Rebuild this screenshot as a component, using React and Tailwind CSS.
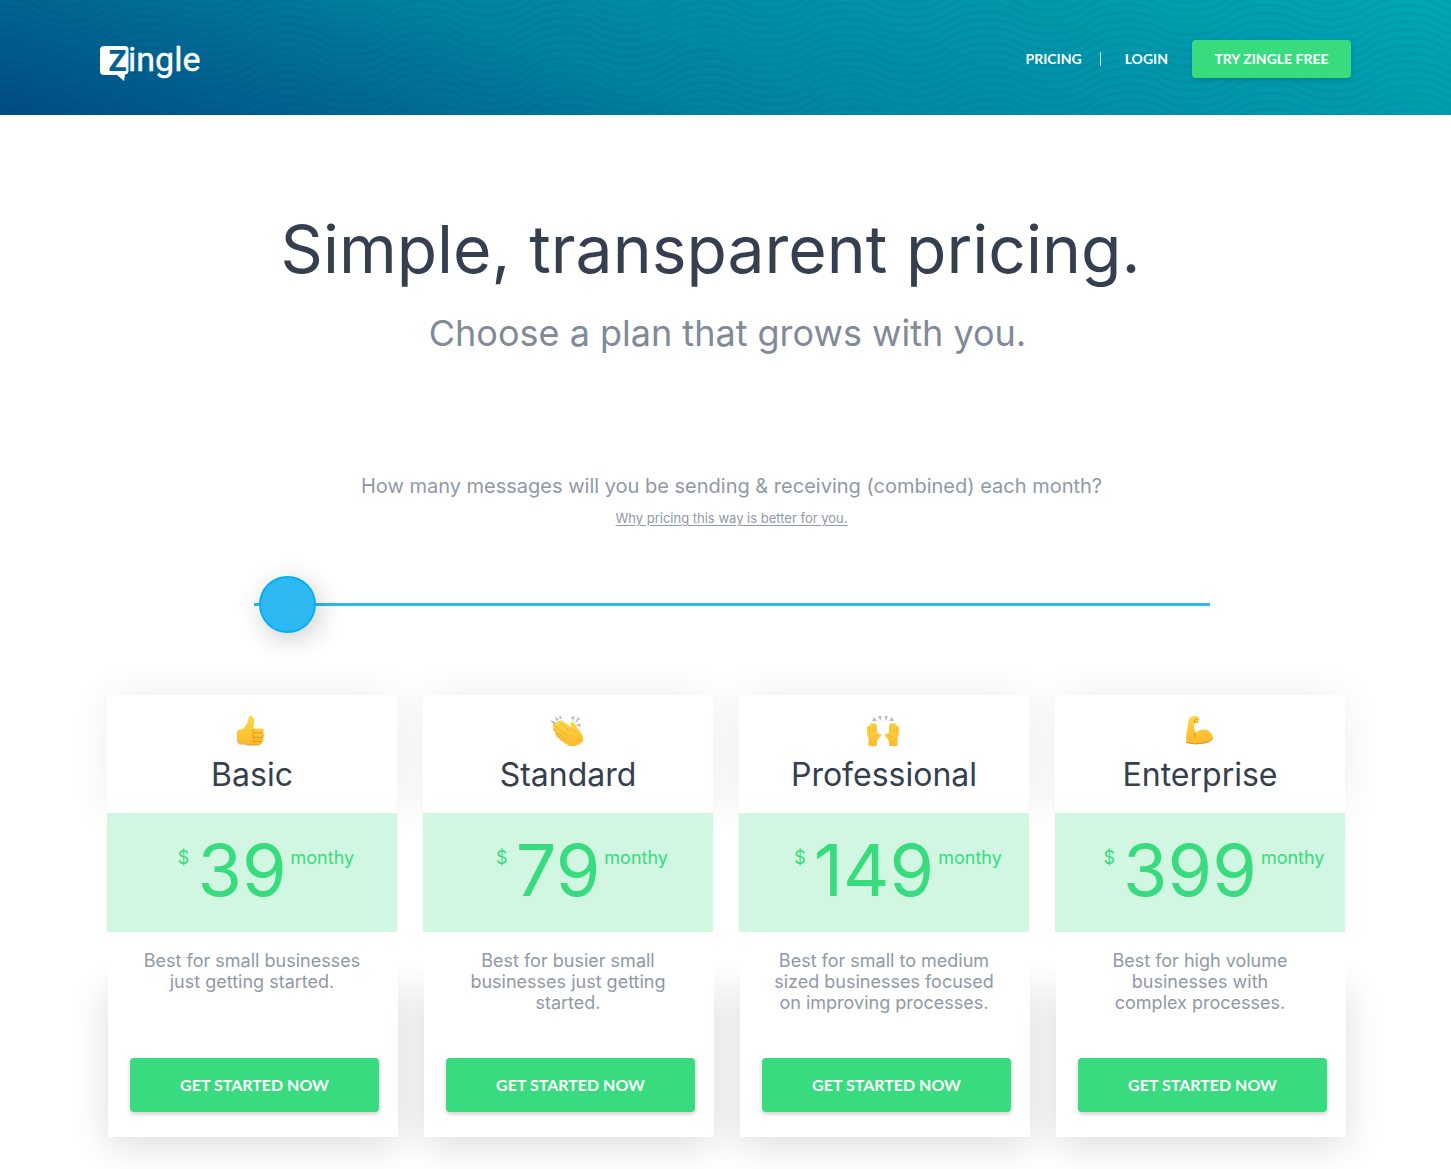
function WavePattern() {
  return (
    <svg className="absolute inset-0 h-full w-full" aria-hidden="true">
      <defs>
        <pattern id="waves" width="140" height="8" patternUnits="userSpaceOnUse" patternTransform="rotate(-3)">
          {[-16, -8, 0, 8, 16].map((y) => (
            <path
              key={y}
              d={`M-35 ${y} C-17 ${y - 12} 17 ${y - 12} 35 ${y} S87 ${y + 12} 105 ${y} S157 ${y - 12} 175 ${y}`}
              fill="none"
              stroke="#00284f"
              strokeOpacity="0.06"
              strokeWidth="3"
            />
          ))}
        </pattern>
      </defs>
      <rect width="100%" height="100%" fill="url(#waves)" />
    </svg>
  );
}

function Logo() {
  return (
    <svg className="block" width="110" height="50" viewBox="0 0 110 50" role="img" aria-label="zingle">
      <path d="M4 10 H25 Q28.500 10 28.500 13.500 V35 Q28.500 38 25 38.500 L24 45 L17 39 H4 Q0 39 0 35 V14 Q0 10 4 10 Z" fill="#fff" />
      <text x="8" y="35" fontFamily="Roboto, sans-serif" fontWeight="500" fontSize="38" fill="#00628f">z</text>
      <text x="28" y="35" fontFamily="Roboto, sans-serif" fontSize="34" fill="#fff" stroke="#fff" strokeWidth="0.4">ingle</text>
    </svg>
  );
}

function EmojiGradient({ id }) {
  return (
    <defs>
      <linearGradient id={id} x1="0" y1="0" x2="0" y2="1">
        <stop offset="0" stopColor="#ffd84a" />
        <stop offset="1" stopColor="#fbb829" />
      </linearGradient>
    </defs>
  );
}

function ThumbsUp() {
  return (
    <svg width="34" height="34" viewBox="0 0 34 34" aria-hidden="true">
      <EmojiGradient id="thumb" />
      <path d="M3 18 Q3 16 5.500 15.800 L9 15 C11 12 13.500 10 14 7 L14.500 3.500 C15 1.300 20 1 20.300 6 C20.500 9 19.500 12 19.500 14.500 L27 14.500 C30 14.500 30.500 18 29 19 C31 20 30.500 23 29 23.500 C30 25 29.500 27 28 27.500 C28.500 29.500 27 31 25 31 H15 C12 31 11 29.500 9 29.700 L5 29.700 Q3 29.500 3 27 Z" fill="url(#thumb)" />
      <path d="M20 18.800 H29 M19.500 23.400 H29 M20 27.600 H28 M19.500 15 Q17.500 17 20 19 Q17.500 21 19.500 23.400 Q18 26 20.500 28" fill="none" stroke="#e3951b" strokeWidth="1" />
      <path d="M5 30 L9 30 C12 30 12 31 15 31 H25" fill="none" stroke="#dd9520" strokeWidth="0.8" />
    </svg>
  );
}

function Clap() {
  return (
    <svg width="34" height="34" viewBox="0 0 34 34" aria-hidden="true">
      <EmojiGradient id="clap" />
      <path d="M0 6 L6 8 L4 11 Z M5 2 L9 6 L6 7 Z M10 1 L12 5 L9 5 Z M21 3 L25 2 L23 7 Z M28 3 L30 5 L25 9 Z M28 10 L31 10 L30 13 L26 11 Z" fill="#b9bcc0" />
      <path d="M8 8 Q11 5 13.500 7.500 L22 14 L20.500 10 Q21 6.500 24 8.500 L28 15 Q34 21 33 27 Q28 33 20 32 Q15 30 7 23 Q4 20 6 18.500 Q1 16 4 14 Q1 11.500 4.500 10 Q6 7 8 8 Z" fill="url(#clap)" />
      <path d="M4 10 Q4 12 8 15 L17 22 M3.500 14 Q5 17 8 19 L15 25 M6 19 Q8 23 13 27 M9 8 L20 17 M21 14 L25 18" fill="none" stroke="#e2a535" strokeWidth="0.8" strokeLinecap="round" />
    </svg>
  );
}

function Hand() {
  return (
    <g>
      <path d="M2 31.500 V24 Q0 21 0.500 13 Q1.500 10.500 3 13 L3.200 10.500 Q4.500 8 5.800 10 Q7 7.500 8.500 10 Q10.300 9 10.500 12 L11 20 Q13 19 14.500 20.500 Q15 22 12.500 24 L10.500 27 V31.500 Q6 33 2 31.500 Z" fill="url(#raise)" />
      <path d="M3.100 12 V18 M5.800 10.500 V18 M8.400 10.500 V18 M10.800 21 Q8 22 7.500 24" fill="none" stroke="#e2a026" strokeWidth="0.6" />
    </g>
  );
}

function RaisedHands() {
  return (
    <svg width="34" height="34" viewBox="0 0 34 34" aria-hidden="true">
      <EmojiGradient id="raise" />
      <path d="M8 3 L11 7 L6 7 Z M12 2 L15.500 2 L14.500 7 Z M22 2 L18.500 2 L19.500 7 Z M26 3 L23 7 L28 7 Z" fill="#b9bcc0" />
      <g transform="translate(0.500 0)"><Hand /></g>
      <g transform="translate(33.500 0) scale(-1 1)"><Hand /></g>
    </svg>
  );
}

function Biceps() {
  return (
    <svg width="34" height="34" viewBox="0 0 34 34" aria-hidden="true">
      <EmojiGradient id="arm" />
      <path d="M7 4.500 Q9 1.500 13 2 Q17 2 17.300 5 Q17.500 8 15 8.500 L12.500 8.500 Q11.500 13 13.500 19 Q17 15 23 15.500 Q30 17 31 24 Q29 29 20 29.500 Q10 31 4.500 28.500 Q3.500 24 5 17 Z" fill="url(#arm)" />
      <path d="M4.500 28.500 Q12 31 21 29.300 Q28 28.500 30.800 24.500 M13.500 19 Q12 21 12.500 23 M12.500 8.500 Q11.500 7 13 5.500 L16 5 M12.500 8.500 L15.500 8" fill="none" stroke="#dd9520" strokeWidth="1" strokeLinecap="round" />
    </svg>
  );
}

const plans = [
  { name: "Basic", price: "39", Icon: ThumbsUp, lines: ["Best for small businesses", "just getting started."] },
  { name: "Standard", price: "79", Icon: Clap, lines: ["Best for busier small", "businesses just getting", "started."] },
  { name: "Professional", price: "149", Icon: RaisedHands, lines: ["Best for small to medium", "sized businesses focused", "on improving processes."] },
  { name: "Enterprise", price: "399", Icon: Biceps, lines: ["Best for high volume", "businesses with", "complex processes."] },
];

function PlanCard({ name, price, Icon, lines }) {
  return (
    <article className="flex flex-col">
      <div className="flex h-[118px] flex-col items-center rounded bg-white pt-[19px] pr-[2px] shadow-[0_0_40px_rgba(0,0,0,0.07)]">
        <Icon />
        <h2 className="mt-[7px] pl-[2px] text-[32px] leading-10 text-[#353f4f]">{name}</h2>
      </div>
      <div className="relative flex h-[119px] items-start justify-center bg-[#d1f6e1] pt-[19px] pl-7 text-[#38dc7f]">
        <span className="pt-3 text-lg">$</span>
        <span className="mr-1 ml-2 text-7xl leading-[76px]">{price}</span>
        <span className="pt-3 text-lg">monthy</span>
      </div>
      <div className="relative isolate -mr-px ml-px flex h-[205px] flex-col pt-[18px] pr-[19px] pb-[25px] pl-[22px] before:absolute before:inset-x-0 before:top-12 before:bottom-0 before:-z-10 before:bg-white before:shadow-[0_8px_36px_rgba(0,0,0,0.14)] after:absolute after:inset-0 after:-z-10 after:bg-white">
        <p className="pr-[5px] text-center text-lg leading-[21px] text-[#9099a6]">
          {lines.map((line) => (
            <span key={line} className="block whitespace-nowrap">{line}</span>
          ))}
        </p>
        <button className="mt-auto h-[54px] w-full rounded bg-[#38dc7f] font-['Lato'] text-base font-bold text-white shadow-[0_2px_4px_rgba(0,0,0,0.2)]">
          GET STARTED NOW
        </button>
      </div>
    </article>
  );
}

export default function App() {
  return (
    <div className="min-h-screen overflow-x-hidden bg-white pb-8 font-['Inter',sans-serif]">
      <header className="relative bg-[linear-gradient(20deg,#004b85_0%,#0083a0_42%,#00a8b5_100%)]">
        <WavePattern />
        <div className="relative flex h-[115px] items-center justify-between px-[100px] pt-[3px]">
          <a href="#home" className="pt-1"><Logo /></a>
          <nav className="flex items-center font-['Lato'] text-sm font-bold text-white">
            <a href="#pricing">PRICING</a>
            <span className="mr-6 ml-[18px] h-[14px] w-px bg-white/80" />
            <a href="#login">LOGIN</a>
            <button className="ml-6 h-[38px] w-[159px] rounded bg-[#38dc7f] shadow-[0_2px_4px_rgba(0,0,0,0.15)]">TRY ZINGLE FREE</button>
          </nav>
        </div>
      </header>
      <main>
        <section className="flex flex-col items-center pt-[90px] text-center">
          <h1 className="mr-[30px] text-[66px] leading-[88px] text-[#353f4f]">Simple, transparent pricing.</h1>
          <p className="mt-4 ml-1 text-4xl leading-12 text-[#7f8a9a]">Choose a plan that grows with you.</p>
          <label htmlFor="messages" className="mt-[115px] ml-3 text-xl leading-7 text-[#9099a6]">
            How many messages will you be sending &amp; receiving (combined) each month?
          </label>
          <a href="#why" className="mt-2 ml-3 text-[13px] leading-5 text-[#9099a6] underline underline-offset-2">
            Why pricing this way is better for you.
          </a>
        </section>
        <div className="pt-12 pr-[241px] pl-[254px]">
          <input
            id="messages"
            type="range"
            min="0"
            max="180"
            defaultValue="1"
            className="block h-[57px] w-full appearance-none bg-transparent [&::-webkit-slider-runnable-track]:h-[3px] [&::-webkit-slider-runnable-track]:bg-[#2eb9f2] [&::-webkit-slider-thumb]:-mt-[27px] [&::-webkit-slider-thumb]:h-[57px] [&::-webkit-slider-thumb]:w-[57px] [&::-webkit-slider-thumb]:appearance-none [&::-webkit-slider-thumb]:rounded-full [&::-webkit-slider-thumb]:border-2 [&::-webkit-slider-thumb]:border-[#08aef2] [&::-webkit-slider-thumb]:bg-[#2eb9f2] [&::-webkit-slider-thumb]:shadow-[4px_6px_28px_rgba(0,0,0,0.2)]"
          />
        </div>
        <section className="grid grid-cols-4 gap-[26px] pt-[62px] pr-[106px] pl-[107px]">
          {plans.map((plan) => (
            <PlanCard key={plan.name} {...plan} />
          ))}
        </section>
      </main>
    </div>
  );
}
